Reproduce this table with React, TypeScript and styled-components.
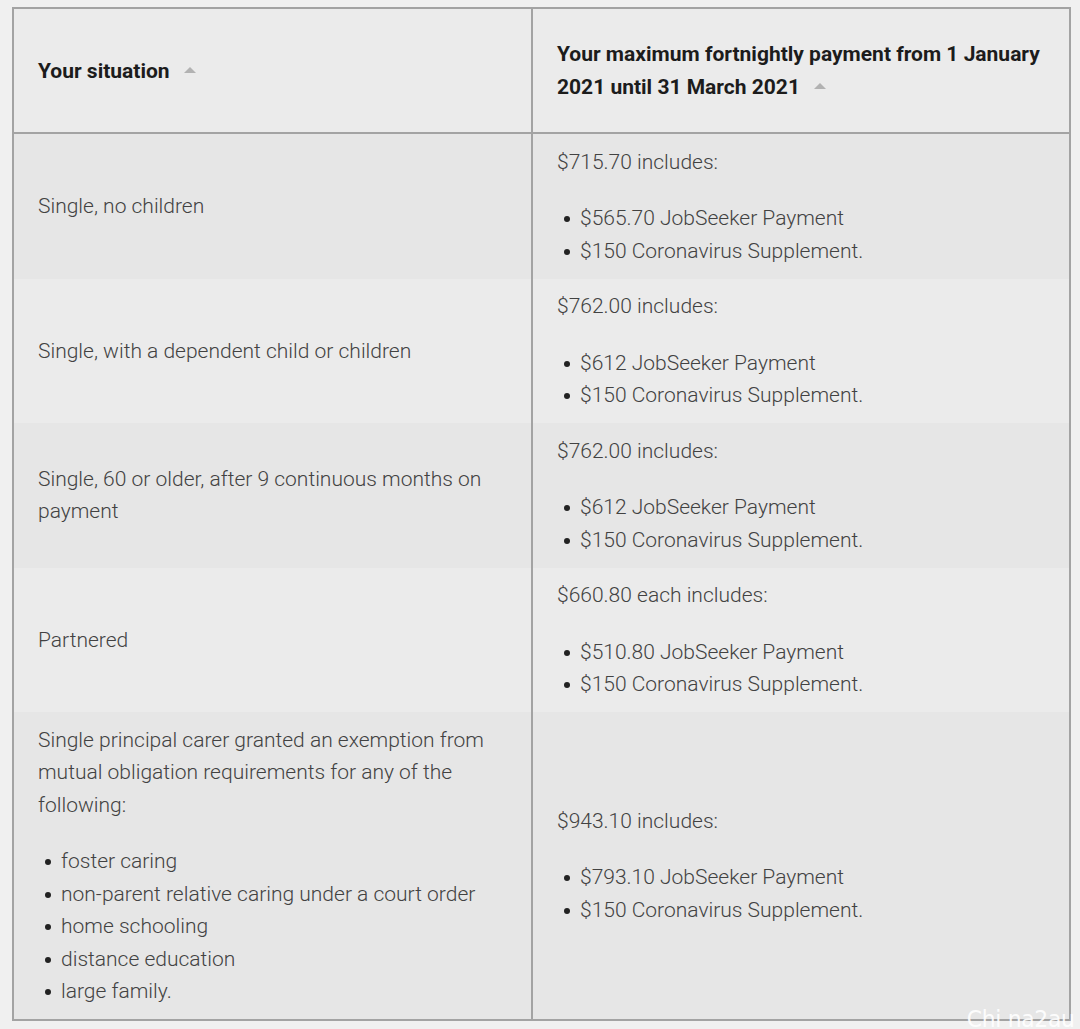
import React from "react";
import styled, { createGlobalStyle } from "styled-components";

const GlobalStyle = createGlobalStyle`
  html, body {
    margin: 0;
    padding: 0;
    background: #f0f0f0;
  }
  body {
    font-family: Roboto, "Liberation Sans", Arial, sans-serif;
  }
`;

const Page = styled.div`
  position: relative;
  width: 1080px;
  height: 1029px;
  overflow: hidden;
  padding: 7px 0 0 12px;
  box-sizing: border-box;
  background: #f0f0f0;
`;

const Table = styled.table`
  width: 1057px;
  border-collapse: collapse;
  border: 2px solid #a3a3a3;
  table-layout: fixed;
`;

const Col = styled.col<{ $w: number }>`
  width: ${(p) => p.$w}px;
`;

const HeadCell = styled.th`
  box-sizing: border-box;
  background: #ebebeb;
  border: 2px solid #a3a3a3;
  padding: 29px 24px 28px;
  text-align: left;
  vertical-align: middle;
  font-family: Roboto, "Liberation Sans", Arial, sans-serif;
  font-weight: 700;
  font-size: 21px;
  line-height: 33px;
  color: #1c1c1c;
`;

const SortArrow = styled.span`
  display: inline-block;
  width: 0;
  height: 0;
  margin-left: 14px;
  border-left: 6px solid transparent;
  border-right: 6px solid transparent;
  border-bottom: 6px solid #b2b2b2;
  vertical-align: middle;
  position: relative;
  top: -2px;
`;

const Row = styled.tr<{ $shade: boolean }>`
  background: ${(p) => (p.$shade ? "#e6e6e6" : "#ebebeb")};
`;

const Cell = styled.td`
  box-sizing: border-box;
  border-left: 2px solid #a3a3a3;
  border-right: 2px solid #a3a3a3;
  padding: 11.5px 24px 11.5px;
  vertical-align: middle;
  font-family: Roboto, "Liberation Sans", Arial, sans-serif;
  font-weight: 300;
  font-size: 21px;
  line-height: 32.5px;
  color: #424242;
`;

const Para = styled.p`
  margin: 0 0 24px;
`;

const List = styled.ul`
  margin: 0;
  padding: 0 0 0 23px;
  list-style: none;
`;

const Item = styled.li`
  position: relative;
  &::before {
    content: "";
    position: absolute;
    left: -16px;
    top: 14px;
    width: 6px;
    height: 6px;
    border-radius: 50%;
    background: #222;
  }
`;

const Watermark = styled.div`
  position: absolute;
  right: 5px;
  bottom: -3px;
  font-family: "DejaVu Sans", sans-serif;
  font-size: 23px;
  letter-spacing: -0.3px;
  color: rgba(255, 255, 255, 0.92);
  transform: scaleX(0.95);
  transform-origin: right bottom;
`;

type RowData = {
  situation: React.ReactNode;
  total: string;
  jobseeker: string;
};

const rows: RowData[] = [
  { situation: "Single, no children", total: "$715.70 includes:", jobseeker: "$565.70 JobSeeker Payment" },
  { situation: "Single, with a dependent child or children", total: "$762.00 includes:", jobseeker: "$612 JobSeeker Payment" },
  { situation: "Single, 60 or older, after 9 continuous months on payment", total: "$762.00 includes:", jobseeker: "$612 JobSeeker Payment" },
  { situation: "Partnered", total: "$660.80 each includes:", jobseeker: "$510.80 JobSeeker Payment" },
  {
    situation: (
      <>
        <Para>Single principal carer granted an exemption from mutual obligation requirements for any of the following:</Para>
        <List>
          <Item>foster caring</Item>
          <Item>non-parent relative caring under a court order</Item>
          <Item>home schooling</Item>
          <Item>distance education</Item>
          <Item>large family.</Item>
        </List>
      </>
    ),
    total: "$943.10 includes:",
    jobseeker: "$793.10 JobSeeker Payment",
  },
];

export default function App() {
  return (
    <Page>
      <GlobalStyle />
      <Table>
        <colgroup>
          <Col $w={519} />
          <Col $w={538} />
        </colgroup>
        <thead>
          <tr>
            <HeadCell>
              Your situation
              <SortArrow />
            </HeadCell>
            <HeadCell>
              Your maximum fortnightly payment from 1 January 2021 until 31 March 2021
              <SortArrow />
            </HeadCell>
          </tr>
        </thead>
        <tbody>
          {rows.map((r, i) => (
            <Row key={i} $shade={i % 2 === 0}>
              <Cell>{r.situation}</Cell>
              <Cell>
                <Para>{r.total}</Para>
                <List>
                  <Item>{r.jobseeker}</Item>
                  <Item>$150 Coronavirus Supplement.</Item>
                </List>
              </Cell>
            </Row>
          ))}
        </tbody>
      </Table>
      <Watermark>Chi na2au</Watermark>
    </Page>
  );
}
